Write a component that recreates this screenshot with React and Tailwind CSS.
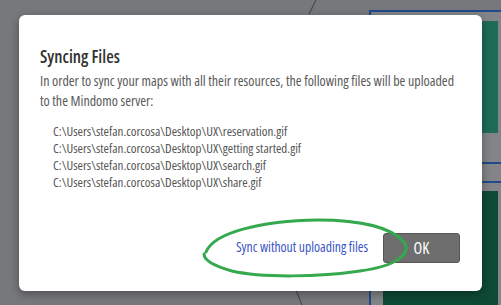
import React from 'react';

const files = [
  'C:\\Users\\stefan.corcosa\\Desktop\\UX\\reservation.gif',
  'C:\\Users\\stefan.corcosa\\Desktop\\UX\\getting started.gif',
  'C:\\Users\\stefan.corcosa\\Desktop\\UX\\search.gif',
  'C:\\Users\\stefan.corcosa\\Desktop\\UX\\share.gif',
];

function Backdrop() {
  // mind map canvas behind the modal
  return (
    <div className="absolute inset-0 bg-[#77787b]">
      <div className="absolute left-[369px] top-[10px] right-0 h-[2px] bg-[#1f4a8c]" />
      <div className="absolute left-[369px] top-[10px] bottom-0 w-[2px] bg-[#1f4a8c]" />
      <div className="absolute left-[371px] top-[12px] right-0 bottom-0 bg-[#838487]" />
      <div className="absolute left-[482px] top-[21px] w-[16px] h-[112px] bg-[#1e6b58]" />
      <div className="absolute left-[371px] top-[162px] right-0 h-[2px] bg-[#1f4a8c]" />
      <div className="absolute left-[371px] top-[181px] right-0 h-[2px] bg-[#1f4a8c]" />
      <div className="absolute left-[383px] top-[191px] right-[3px] bottom-0 bg-[#0e4a35]" />
      <svg className="absolute inset-0" width="501" height="305">
        <line x1="316" y1="0" x2="309" y2="14" stroke="#4b4c4f" strokeWidth="1.2" />
        <line x1="296" y1="290" x2="302" y2="305" stroke="#4b4c4f" strokeWidth="1.2" />
      </svg>
    </div>
  );
}

function Scribble() {
  return (
    <svg className="absolute left-0 top-0 pointer-events-none" width="501" height="305">
      <path
        d="M206 252 C 214 232, 262 221, 318 220 C 362 220, 392 228, 404 242 C 412 254, 396 266, 360 271 C 320 277, 262 278, 232 271 C 214 266, 204 260, 204 254"
        fill="none"
        stroke="#35a94d"
        strokeWidth="3"
        strokeLinecap="round"
      />
    </svg>
  );
}

export default function App() {
  return (
    <div className="relative w-[501px] h-[305px] overflow-hidden flex items-center justify-center font-['Open_Sans',sans-serif] font-stretch-condensed">
      <Backdrop />
      <div className="relative w-[463px] h-[276px] bg-white rounded-[6px] shadow-[0_3px_10px_rgba(0,0,0,0.35)] pl-[21px] pr-[21px] pt-[31px] flex flex-col">
        <h2 className="text-[17.3px] leading-[22px] font-semibold text-[#333333]">Syncing Files</h2>
        <p className="mt-[3px] pr-[3px] text-[14px] leading-[20px] text-[#5a5a5a]">
          In order to sync your maps with all their resources, the following files will be uploaded to the Mindomo server:
        </p>
        <ul className="mt-[12px] pl-[13px] text-[13px] leading-[17px] text-[#555555]">
          {files.map((f) => (
            <li key={f}>{f}</li>
          ))}
        </ul>
        <div className="mt-auto mb-[28px] flex items-center justify-end gap-[15px]">
          <button className="text-[13.7px] text-[#3c56c6]">Sync without uploading files</button>
          <button className="w-[77px] h-[30px] rounded-[3px] bg-[#6e6e6e] border border-[#565656] text-white text-[16px] mr-[1px]">
            OK
          </button>
        </div>
      </div>
      <Scribble />
    </div>
  );
}
